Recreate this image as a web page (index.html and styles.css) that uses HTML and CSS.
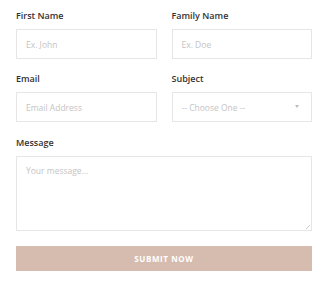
FILE: index.html
```html
<!DOCTYPE html>
<html lang="en">
<head>
  <meta charset="UTF-8" />
  <meta name="viewport" content="width=device-width, initial-scale=1.0" />
  <title>Contact Form</title>
  <link rel="stylesheet" href="styles.css">
</head>
<body>
  <!-- Contact Form -->
  <form class="contact-form">
    <div class="field">
      <label for="firstName">First Name</label>
      <input type="text" id="firstName" placeholder="Ex. John" />
    </div>
    <div class="field">
      <label for="familyName">Family Name</label>
      <input type="text" id="familyName" placeholder="Ex. Doe" />
    </div>
    <div class="field">
      <label for="email">Email</label>
      <input type="email" id="email" placeholder="Email Address" />
    </div>
    <div class="field">
      <label for="subject">Subject</label>
      <div class="select-wrap">
        <select id="subject">
          <option>-- Choose One --</option>
        </select>
        <span class="caret"></span>
      </div>
    </div>
    <div class="field full message-field">
      <label for="message">Message</label>
      <textarea id="message" placeholder="Your message..."></textarea>
    </div>
    <button type="button" class="submit-btn full">Submit Now</button>
  </form>
</body>
</html>
```

FILE: styles.css
```css
/* Base Styles */
body {
  font-family: 'Open Sans', 'Liberation Sans', sans-serif;
  background-color: #fff;
  margin: 0;
  padding: 10px 18px 0 16px;
  color: #333;
}
.contact-form {
  display: grid;
  grid-template-columns: 1fr 1fr;
  column-gap: 15px;
  row-gap: 14px;
}
.field {
  display: flex;
  flex-direction: column;
}
.full {
  grid-column: 1 / -1;
}
.field label {
  font-size: 9px;
  font-weight: 600;
  line-height: 12px;
  margin-bottom: 7px;
  color: #333;
}
.message-field {
  margin-top: 1px;
}
.field input,
.field select,
.field textarea {
  box-sizing: border-box;
  width: 100%;
  border: 1px solid #e6e6e6;
  background: #fff;
  font-family: inherit;
  font-size: 8.5px;
  color: #333;
  padding: 0 9px;
  outline: none;
  border-radius: 0;
}
.field input,
.field select {
  height: 30px;
}
.field input::placeholder,
.field textarea::placeholder {
  color: #c4c4c4;
}
.select-wrap {
  position: relative;
}
.field select {
  appearance: none;
  -webkit-appearance: none;
  color: #c4c4c4;
}
.caret {
  position: absolute;
  right: 13px;
  top: 13px;
  border-left: 2px solid transparent;
  border-right: 2px solid transparent;
  border-top: 3px solid #bbb;
}
.field textarea {
  height: 75px;
  padding: 8px 9px;
  resize: none;
  /* faint resize grip in the corner */
  background-image: linear-gradient(135deg, transparent 70%, #ccc 70%, #ccc 76%, transparent 76%, transparent 86%, #ccc 86%, #ccc 92%, transparent 92%);
  background-size: 7px 7px;
  background-position: right 1px bottom 1px;
  background-repeat: no-repeat;
}
.submit-btn {
  margin-top: 1px;
  height: 25px;
  border: none;
  background-color: #d6bcae;
  color: #fff;
  font-family: inherit;
  font-size: 8px;
  font-weight: 700;
  letter-spacing: 0.6px;
  text-transform: uppercase;
  cursor: pointer;
}
```
